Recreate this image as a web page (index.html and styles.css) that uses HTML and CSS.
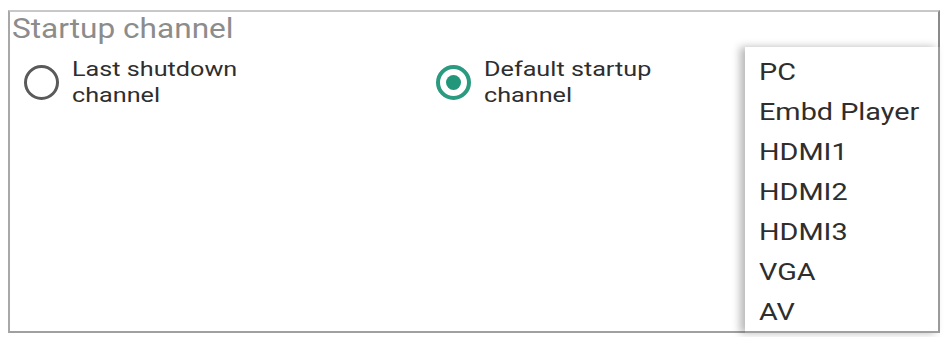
FILE: index.html
```html
<!DOCTYPE html>
<html>
<head>
<meta charset="utf-8">
<link rel="stylesheet" href="styles.css">
</head>
<body>
<div class="frame">
  <div class="title"><span class="wide">Startup channel</span></div>
  <div class="options">
    <div class="option opt1">
      <span class="radio"></span>
      <span class="label">Last shutdown<br>channel</span>
    </div>
    <div class="option opt2">
      <span class="radio checked"></span>
      <span class="label">Default startup<br>channel</span>
    </div>
  </div>
  <ul class="menu">
    <li><span class="wide">PC</span></li>
    <li><span class="wide">Embd Player</span></li>
    <li><span class="wide">HDMI1</span></li>
    <li><span class="wide">HDMI2</span></li>
    <li><span class="wide">HDMI3</span></li>
    <li><span class="wide">VGA</span></li>
    <li><span class="wide">AV</span></li>
  </ul>
</div>
</body>
</html>
```
FILE: styles.css
```css
html, body {
  margin: 0;
  padding: 0;
  background: #fff;
}
body {
  width: 945px;
  height: 337px;
  overflow: hidden;
  font-family: Roboto, "Liberation Sans", sans-serif;
}
.frame {
  position: relative;
  margin: 10px 0 0 8px;
  width: 932px;
  height: 323px;
  border-top: 2px solid #c8c8c8;
  border-left: 2px solid #a8a8a8;
  border-right: 2px solid #8a8a8a;
  border-bottom: 2px solid #a0a0a0;
  box-sizing: border-box;
}
.wide {
  display: inline-block;
  transform: scaleX(1.2);
  transform-origin: left center;
  white-space: nowrap;
}
.title {
  font-size: 27px;
  color: #8c8c8c;
  line-height: 30px;
  margin: 2px 0 0 2px;
}
.title .wide {
  transform: scaleX(1.17);
}
.options {
  display: flex;
  margin-top: 3px;
}
.option {
  display: flex;
  align-items: flex-start;
}
.opt1 {
  width: 412px;
  padding-left: 14px;
}
.radio {
  width: 35px;
  height: 35px;
  box-sizing: border-box;
  border: 3px solid #5a5a5a;
  border-radius: 50%;
  margin-top: 18px;
  flex: none;
  position: relative;
}
.radio.checked {
  border-color: #2a9a80;
  border-width: 4px;
}
.radio.checked::after {
  content: "";
  position: absolute;
  left: 6px;
  top: 6px;
  width: 15px;
  height: 15px;
  border-radius: 50%;
  background: #22967a;
}
.label {
  display: inline-block;
  font-size: 21px;
  line-height: 26px;
  color: #2e2e2e;
  margin-left: 13px;
  margin-top: 9px;
  transform: scaleX(1.2);
  transform-origin: left top;
  white-space: nowrap;
}
.menu {
  position: absolute;
  left: 735px;
  top: 35px;
  right: -2px;
  bottom: -2px;
  margin: 0;
  padding: 5px 0 0 14px;
  list-style: none;
  background: #fff;
  border-right: 2px solid #9a9a9a;
  border-bottom: 2px solid #a0a0a0;
  box-shadow: -5px 0 8px rgba(0,0,0,0.28);
}
.menu li {
  font-size: 24px;
  line-height: 40px;
  color: #2e2e2e;
}
```
